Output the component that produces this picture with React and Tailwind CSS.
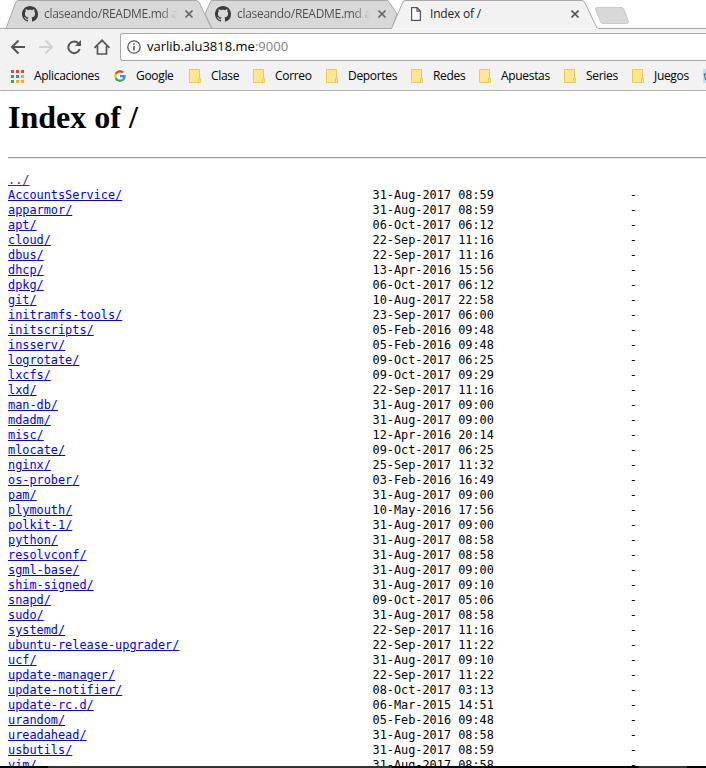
const dirs = `AccountsService|31-Aug-2017 08:59
apparmor|31-Aug-2017 08:59
apt|06-Oct-2017 06:12
cloud|22-Sep-2017 11:16
dbus|22-Sep-2017 11:16
dhcp|13-Apr-2016 15:56
dpkg|06-Oct-2017 06:12
git|10-Aug-2017 22:58
initramfs-tools|23-Sep-2017 06:00
initscripts|05-Feb-2016 09:48
insserv|05-Feb-2016 09:48
logrotate|09-Oct-2017 06:25
lxcfs|09-Oct-2017 09:29
lxd|22-Sep-2017 11:16
man-db|31-Aug-2017 09:00
mdadm|31-Aug-2017 09:00
misc|12-Apr-2016 20:14
mlocate|09-Oct-2017 06:25
nginx|25-Sep-2017 11:32
os-prober|03-Feb-2016 16:49
pam|31-Aug-2017 09:00
plymouth|10-May-2016 17:56
polkit-1|31-Aug-2017 09:00
python|31-Aug-2017 08:58
resolvconf|31-Aug-2017 08:58
sgml-base|31-Aug-2017 09:00
shim-signed|31-Aug-2017 09:10
snapd|09-Oct-2017 05:06
sudo|31-Aug-2017 08:58
systemd|22-Sep-2017 11:16
ubuntu-release-upgrader|22-Sep-2017 11:22
ucf|31-Aug-2017 09:10
update-manager|22-Sep-2017 11:22
update-notifier|08-Oct-2017 03:13
update-rc.d|06-Mar-2015 14:51
urandom|05-Feb-2016 09:48
ureadahead|31-Aug-2017 08:58
usbutils|31-Aug-2017 08:59
vim|31-Aug-2017 08:58`.split('\n').map((line) => line.split('|'));

const bookmarks = [
  { label: 'Clase', width: 'w-[64px]' },
  { label: 'Correo', width: 'w-[73px]' },
  { label: 'Deportes', width: 'w-[85px]' },
  { label: 'Redes', width: 'w-[68px]' },
  { label: 'Apuestas', width: 'w-[85px]' },
  { label: 'Series', width: 'w-[68px]' },
  { label: 'Juegos', width: 'w-[71px]' },
];

function GithubMark() {
  return (
    <svg className="h-4 w-4 shrink-0" viewBox="0 0 16 16" fill="#3c3c3c">
      <path d="M8 0C3.58 0 0 3.58 0 8c0 3.54 2.29 6.53 5.47 7.59.4.07.55-.17.55-.38 0-.19-.01-.82-.01-1.49-2.01.37-2.53-.49-2.69-.94-.09-.23-.48-.94-.82-1.13-.28-.15-.68-.52-.01-.53.63-.01 1.08.58 1.23.82.72 1.21 1.87.87 2.33.66.07-.52.28-.87.51-1.07-1.78-.2-3.64-.89-3.64-3.95 0-.87.31-1.59.82-2.15-.08-.2-.36-1.02.08-2.12 0 0 .67-.21 2.2.82.64-.18 1.32-.27 2-.27s1.36.09 2 .27c1.53-1.04 2.2-.82 2.2-.82.44 1.1.16 1.92.08 2.12.51.56.82 1.27.82 2.15 0 3.07-1.87 3.75-3.65 3.95.29.25.54.73.54 1.48 0 1.07-.01 1.93-.01 2.2 0 .21.15.46.55.38A8.01 8.01 0 0 0 16 8c0-4.42-3.58-8-8-8z" />
    </svg>
  );
}

function CloseMark({ color }) {
  return (
    <svg className="h-2 w-2 shrink-0" viewBox="0 0 8 8" stroke={color} strokeWidth="1.6">
      <path d="M.5 .5l7 7M7.5 .5l-7 7" />
    </svg>
  );
}

function Folder() {
  return (
    <svg className="h-[14px] w-3 shrink-0" viewBox="0 0 12 14">
      <path d="M.5 .5h10v9h1v4H.5z" fill="#ffe694" stroke="#ecc955" />
      <path d="M9.5 13v-3.5h2" fill="none" stroke="#ecc955" />
    </svg>
  );
}

function GithubTab() {
  return (
    <div className="flex h-7 items-center">
      <GithubMark />
      <span className="ml-[6px] w-[133px] whitespace-nowrap bg-linear-to-r from-[#4c4c4c] from-88% to-transparent bg-clip-text tracking-[-0.3px] text-transparent">
        claseando/README.md a
      </span>
      <span className="ml-[8px]"><CloseMark color="#696969" /></span>
    </div>
  );
}

function TabStrip() {
  return (
    <div className="relative h-[29px] bg-white text-xs tracking-[-0.2px]">
      <svg className="absolute inset-0" width="706" height="29" viewBox="0 0 706 29">
        <path d="M205 14L211 .5H388L397 14L392 28.5H212z" fill="#d8d8d8" stroke="#a9a9a9" />
        <path d="M6 28.5L15.5 3Q16.5 .5 18 .5H196Q198.500 .5 199.500 3L211.500 28.500z" fill="#d8d8d8" stroke="#a9a9a9" />
        <path d="M595.5 9Q595 7.500 597 7.500H621Q623 7.500 624 9L628.500 21.500Q629 23.500 627 23.500H603Q601 23.500 600.500 22z" fill="#d8d8d8" stroke="#cacaca" />
        <path d="M0 28.500H391.500L402.500 3Q403.500 .5 405 .5H582Q584 .5 585 3L596 26Q597 28.500 599 28.500H706" fill="#f2f2f2" stroke="#a9a9a9" />
      </svg>
      <div className="relative flex h-[29px] pl-[22px]">
        <div className="w-[193px]"><GithubTab /></div>
        <div className="w-[196px]"><GithubTab /></div>
        <div className="flex h-7 items-center">
          <svg className="h-[14px] w-[10px]" viewBox="0 0 10 14" fill="#fff" stroke="#555" strokeWidth="1.200">
            <path d="M.6 .6h5.500l3.300 3.500v9.300H.6zM6 .6v3.600h3.400" />
          </svg>
          <span className="ml-[9px] w-[141px] text-[#222]">Index of /</span>
          <CloseMark color="#555" />
        </div>
      </div>
    </div>
  );
}

function Toolbar() {
  return (
    <div className="flex h-[33px] items-start bg-[#f2f2f2] pt-1">
      <svg className="h-7 w-[120px] shrink-0" viewBox="0 0 120 28" fill="none" strokeWidth="2">
        <path d="M25 14H12.500M18.500 7.500L12 14l6.500 6.500" stroke="#555" />
        <path d="M39 14h12.500M45.500 7.500L52 14l-6.500 6.500" stroke="#d1d1d1" />
        <path d="M78.500 10.500A5.800 5.800 0 1 0 79.700 16" stroke="#555" />
        <path d="M81 7v6h-6z" fill="#555" />
        <path d="M94.500 14.800L102 7.300l7.500 7.500M97.500 13v8h9v-8" stroke="#555" strokeWidth="1.700" />
      </svg>
      <div className="flex h-7 flex-1 items-center rounded-l-[3px] border border-r-0 border-[#a9a9a9] bg-white pl-[6px]">
        <svg className="h-[14px] w-[14px]" viewBox="0 0 14 14" fill="none" stroke="#555" strokeWidth="1.300">
          <circle cx="7" cy="7" r="6.200" />
          <path d="M7 6v4.500M7 3.300v1.500" strokeWidth="1.600" />
        </svg>
        <span className="ml-[6px] text-[13px] text-black">varlib.alu3818.me<span className="text-[#808080]">:9000</span></span>
      </div>
    </div>
  );
}

function BookmarksBar() {
  return (
    <div className="flex h-[29px] items-center overflow-hidden border-b border-[#b0b0b0] bg-[#f2f2f2] pl-[11px] text-xs tracking-[-0.32px] text-black">
      <svg className="h-[13px] w-[13px] shrink-0" viewBox="0 0 13 13">
        <path d="M0 0h3v3H0zM5 0h3v3H5zM10 0h3v3h-3z" fill="#ea4335" />
        <path d="M0 5h3v3H0zM0 10h3v3H0z" fill="#34a853" />
        <path d="M5 5h3v3H5z" fill="#1a8cff" />
        <path d="M10 5h3v3h-3zM5 10h3v3H5zM10 10h3v3h-3z" fill="#fbaf05" />
      </svg>
      <span className="ml-[10px] w-[79px] shrink-0">Aplicaciones</span>
      <svg className="h-[14px] w-[14px] shrink-0 rounded-full bg-white p-px" viewBox="0 0 48 48">
        <path fill="#EA4335" d="M24 9.500c3.540 0 6.710 1.220 9.210 3.600l6.850-6.850C35.900 2.380 30.470 0 24 0 14.620 0 6.510 5.380 2.560 13.220l7.980 6.190C12.430 13.720 17.740 9.500 24 9.500z" />
        <path fill="#4285F4" d="M46.980 24.550c0-1.570-.15-3.090-.38-4.550H24v9.020h12.940c-.58 2.960-2.260 5.480-4.780 7.180l7.730 6c4.510-4.180 7.090-10.360 7.090-17.650z" />
        <path fill="#FBBC05" d="M10.530 28.590c-.48-1.450-.76-2.990-.76-4.590s.27-3.140.76-4.590l-7.980-6.190C.92 16.460 0 20.120 0 24s.92 7.540 2.560 10.780l7.970-6.190z" />
        <path fill="#34A853" d="M24 48c6.480 0 11.930-2.130 15.890-5.810l-7.730-6c-2.150 1.450-4.920 2.300-8.160 2.300-6.260 0-11.570-4.220-13.470-9.910l-7.980 6.190C6.510 42.620 14.620 48 24 48z" />
      </svg>
      <span className="ml-[9px] w-[53px] shrink-0">Google</span>
      {bookmarks.map(({ label, width }) => (
        <div key={label} className={`flex shrink-0 items-center gap-[10px] ${width}`}>
          <Folder />
          <span>{label}</span>
        </div>
      ))}
      <svg className="h-4 w-[3px] shrink-0" viewBox="0 0 3 16">
        <path d="M0 1h3v14H0z" fill="#bfdff8" />
        <path d="M3 6H1l1 2v3l1 1" fill="none" stroke="#555" />
      </svg>
    </div>
  );
}

export default function App() {
  return (
    <div className="flex h-[768px] w-[706px] flex-col overflow-hidden bg-white font-['Open_Sans','Noto_Sans',sans-serif]">
      <TabStrip />
      <Toolbar />
      <BookmarksBar />
      <main className="min-h-0 flex-1 overflow-hidden pl-2">
        <h1 className="mt-[8px] font-['Liberation_Serif',serif] text-[32px] leading-[36px] font-bold text-black">Index of /</h1>
        <hr className="mt-[22px] h-[2px] border-t border-b border-t-[#9a9a9a] border-b-[#eee]" />
        <div className="mt-[14px] font-['DejaVu_Sans_Mono',monospace] text-[11.870px] leading-[15px] whitespace-nowrap text-black">
          <div className="h-[15px]"><a className="text-[#551a8b] underline">../</a></div>
          {dirs.map(([name, date]) => (
            <div key={name} className="flex h-[15px]">
              <div className="w-[364.500px]"><a className="text-[#0000ee] underline">{name}/</a></div>
              <div className="w-[257.300px]">{date}</div>
              <div>-</div>
            </div>
          ))}
        </div>
      </main>
      <div className="flex h-[2px] shrink-0 bg-black">
        <div className="ml-12 w-[344px] bg-[#333]" />
        <div className="ml-[247px] w-12 bg-[#333]" />
      </div>
    </div>
  );
}
